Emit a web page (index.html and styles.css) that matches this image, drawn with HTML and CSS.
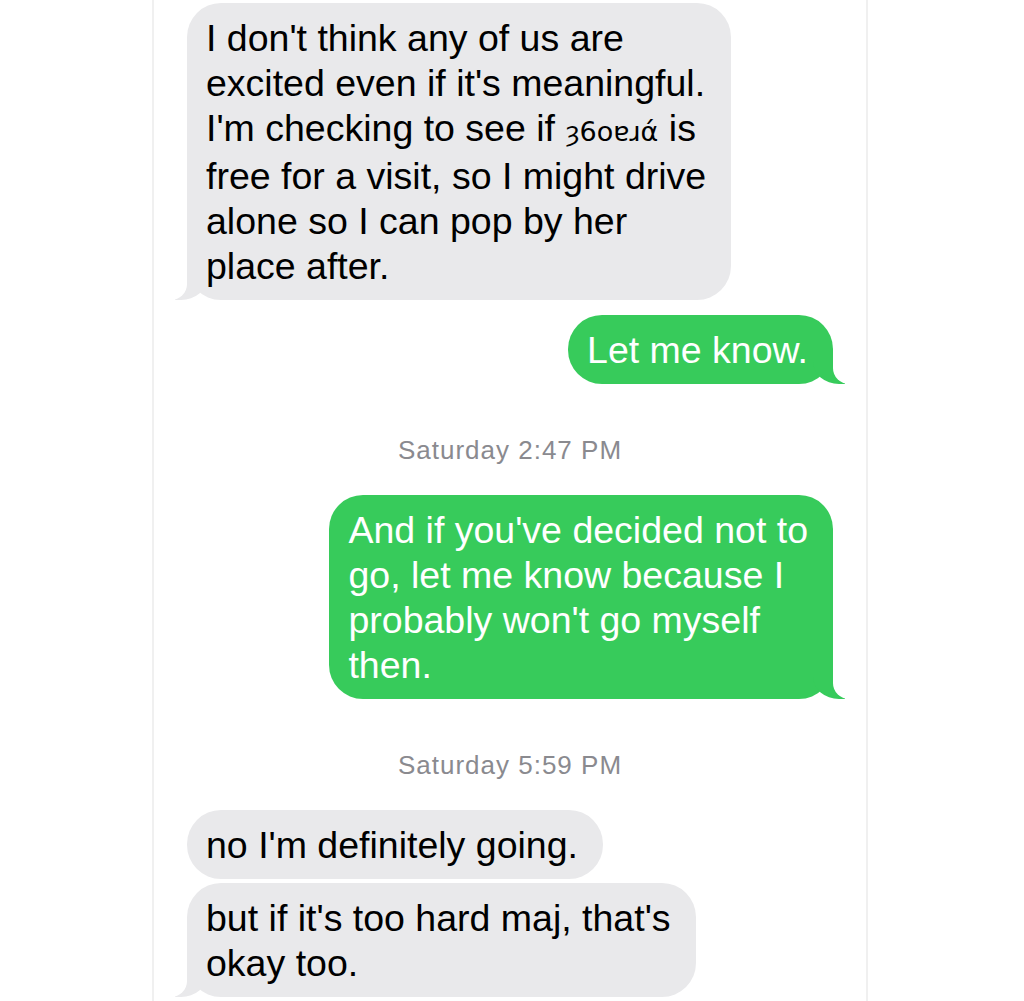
FILE: index.html
```html
<!DOCTYPE html>
<html lang="en">
<head>
  <meta charset="UTF-8" />
  <meta name="viewport" content="width=device-width, initial-scale=1.0"/>
  <title>Messages</title>
  <link rel="stylesheet" href="styles.css">
</head>
<body>
  <div class="thread">
    <div class="bubble received tail">I don't think any of us are<br>excited even if it's meaningful.<br>I'm checking to see if <span class="redacted">ȝ6oɐɹά</span> is<br>free for a visit, so I might drive<br>alone so I can pop by her<br>place after.</div>

    <div class="bubble sent tail first-sent">Let me know.</div>

    <!-- timestamp -->
    <div class="stamp"><span class="day">Saturday</span> 2:47 PM</div>

    <div class="bubble sent tail">And if you've decided not to<br>go, let me know because I<br>probably won't go myself<br>then.</div>

    <div class="stamp"><span class="day">Saturday</span> 5:59 PM</div>

    <div class="bubble received">no I'm definitely going.</div>
    <div class="bubble received tail grouped">but if it's too hard maj, that's<br>okay too.</div>
  </div>
</body>
</html>
```

FILE: styles.css
```css
body {
  margin: 0;
  background: #fff;
  font-family: 'Liberation Sans', Arial, sans-serif;
  overflow: hidden;
}
.thread {
  box-sizing: border-box;
  width: 716px;
  min-height: 1001px;
  margin-left: 152px;
  border-left: 2px solid #f0f0f0;
  border-right: 2px solid #f0f0f0;
  padding: 3px 33px 0 33px;
  display: flex;
  flex-direction: column;
}
.bubble {
  position: relative;
  z-index: 0;
  max-width: 540px;
  padding: 13px 25px 11px 19px;
  border-radius: 34px;
  font-size: 37.5px;
  line-height: 45px;
  white-space: nowrap;
}
.received {
  align-self: flex-start;
  background: #e9e9eb;
  color: #000;
}
.sent {
  align-self: flex-end;
  background: #37cb5b;
  color: #fff;
}
.first-sent {
  margin-top: 15px;
}
.grouped {
  margin-top: 4px;
}
.redacted {
  font-family: 'DejaVu Sans', sans-serif;
  font-size: 27px;
}

/* bubble tails */
.tail::before,
.tail::after {
  content: "";
  position: absolute;
  z-index: -1;
  bottom: 0;
  height: 34px;
}
.sent.tail::before {
  right: -12px;
  border-right: 32px solid #37cb5b;
  border-bottom-left-radius: 26px 22px;
}
.sent.tail::after {
  right: -24px;
  width: 24px;
  background: #fff;
  border-bottom-left-radius: 16px;
}
.received.tail::before {
  left: -12px;
  border-left: 32px solid #e9e9eb;
  border-bottom-right-radius: 26px 22px;
}
.received.tail::after {
  left: -24px;
  width: 24px;
  background: #fff;
  border-bottom-right-radius: 16px;
}

.stamp {
  margin: 51px 0 30px;
  text-align: center;
  font-size: 26px;
  line-height: 30px;
  letter-spacing: 1px;
  color: #8a8a8f;
}
```
